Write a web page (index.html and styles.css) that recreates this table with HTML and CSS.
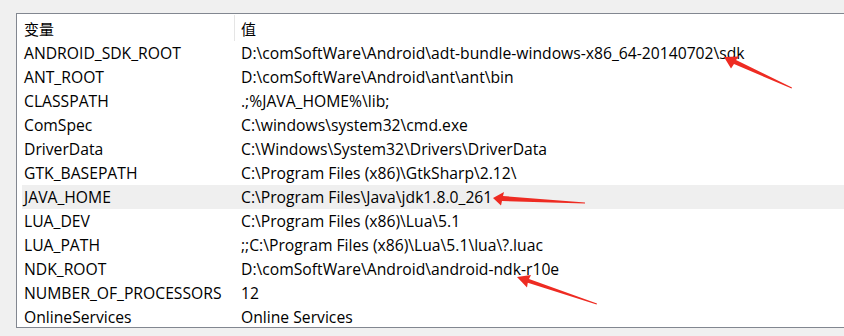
FILE: index.html
```html
<!DOCTYPE html>
<html lang="zh">
<head>
<meta charset="utf-8">
<link rel="stylesheet" href="styles.css">
</head>
<body>
<div class="page">
  <div class="list">
    <div class="head">
      <div class="hcell name">变量</div>
      <div class="hcell value">值</div>
    </div>
    <div class="row"><div class="name">ANDROID_SDK_ROOT</div><div class="value">D:\comSoftWare\Android\adt-bundle-windows-x86_64-20140702\sdk</div></div>
    <div class="row"><div class="name">ANT_ROOT</div><div class="value">D:\comSoftWare\Android\ant\ant\bin</div></div>
    <div class="row"><div class="name">CLASSPATH</div><div class="value">.;%JAVA_HOME%\lib;</div></div>
    <div class="row"><div class="name">ComSpec</div><div class="value">C:\windows\system32\cmd.exe</div></div>
    <div class="row"><div class="name">DriverData</div><div class="value">C:\Windows\System32\Drivers\DriverData</div></div>
    <div class="row"><div class="name">GTK_BASEPATH</div><div class="value">C:\Program Files (x86)\GtkSharp\2.12\</div></div>
    <div class="row hover"><div class="name">JAVA_HOME</div><div class="value">C:\Program Files\Java\jdk1.8.0_261</div></div>
    <div class="row"><div class="name">LUA_DEV</div><div class="value">C:\Program Files (x86)\Lua\5.1</div></div>
    <div class="row"><div class="name">LUA_PATH</div><div class="value">;;C:\Program Files (x86)\Lua\5.1\lua\?.luac</div></div>
    <div class="row"><div class="name">NDK_ROOT</div><div class="value">D:\comSoftWare\Android\android-ndk-r10e</div></div>
    <div class="row"><div class="name">NUMBER_OF_PROCESSORS</div><div class="value">12</div></div>
    <div class="row"><div class="name">OnlineServices</div><div class="value">Online Services</div></div>
  </div>
  <svg class="marks" width="844" height="336" viewBox="0 0 844 336">
    <polygon points="724,57 739,56.5 736,60 792,87.4 791.6,88.6 734,64 731,68.5" fill="#ee2b22"/>
    <polygon points="493,198 504,192 503,196 585,202.4 585,203.6 502,201 501,205.5" fill="#ee2b22"/>
    <polygon points="517,277 531,275 529,279 597,303.4 596.6,304.6 527.8,282.7 527,287.5" fill="#ee2b22"/>
  </svg>
</div>
</body>
</html>
```

FILE: styles.css
```css
html, body {
  margin: 0;
  padding: 0;
  background: #f0f0f0;
  overflow: hidden;
}
.page {
  position: relative;
  width: 844px;
  height: 336px;
  padding: 13px 0 0 16px;
  box-sizing: border-box;
}
.list {
  width: 860px;
  height: 315px;
  box-sizing: border-box;
  border: 1px solid #828790;
  border-right: none;
  background: #fff;
  overflow: hidden;
  font-family: "Open Sans", "Noto Sans CJK SC", sans-serif;
  font-size: 15.7px;
  color: #000;
}
.head {
  display: grid;
  grid-template-columns: 218px 1fr;
  height: 27px;
}
.hcell {
  padding-top: 3px;
  line-height: 24px;
  font-family: "Noto Sans CJK SC", sans-serif;
  font-size: 15px;
}
.head .name {
  padding-left: 7px;
  border-right: 1px solid #e5e5e5;
  margin-top: 1px;
  padding-top: 2px;
}
.head .value {
  padding-left: 6px;
}
.row {
  display: grid;
  grid-template-columns: 213px 1fr;
  margin-left: 5px;
  height: 24px;
  line-height: 24px;
  white-space: nowrap;
}
.row .name {
  padding-left: 2px;
}
.row .value {
  padding-left: 6px;
}
.row.hover {
  background: #efefef;
}
.marks {
  position: absolute;
  left: 0;
  top: 0;
  pointer-events: none;
}
```
